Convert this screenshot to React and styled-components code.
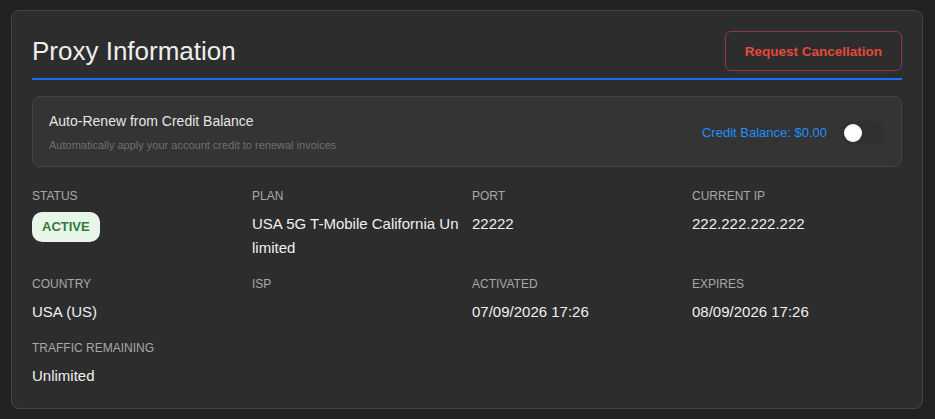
import React, { useState } from 'react';
import styled, { createGlobalStyle } from 'styled-components';

const Global = createGlobalStyle`
    body{
        margin:0;
        background:#222222;
        font-family:"Liberation Sans", Arial, sans-serif;
        color:#eeeeee;
    }
`

const fields = [
    { label: 'Status', badge: 'ACTIVE' },
    { label: 'Plan', value: 'USA 5G T-Mobile California Unlimited' },
    { label: 'Port', value: '22222' },
    { label: 'Current IP', value: '222.222.222.222' },
    { label: 'Country', value: 'USA (US)' },
    { label: 'ISP', value: '' },
    { label: 'Activated', value: '07/09/2026 17:26' },
    { label: 'Expires', value: '08/09/2026 17:26' },
    { label: 'Traffic Remaining', value: 'Unlimited' },
];

const App = () => {
    const [renew, setRenew] = useState(false);
    return (
        <Page>
            <Global />
            <Card>
                <Header>
                    <h2>Proxy Information</h2>
                    <CancelButton>Request Cancellation</CancelButton>
                </Header>
                <RenewBox>
                    <div className="text">
                        <div className="title">Auto-Renew from Credit Balance</div>
                        <div className="sub">Automatically apply your account credit to renewal invoices</div>
                    </div>
                    <div className="right">
                        <span className="balance">Credit Balance: $0.00</span>
                        <Toggle $on={renew} onClick={() => setRenew(!renew)} />
                    </div>
                </RenewBox>
                <Grid>
                    {fields.map(f => (
                        <Field key={f.label}>
                            <div className="label">{f.label}</div>
                            {f.badge
                                ? <Badge>{f.badge}</Badge>
                                : <div className="value">{f.value}</div>}
                        </Field>
                    ))}
                </Grid>
            </Card>
        </Page>
    );
};

export default App;

const Page = styled.div`
    padding:10px 12px 10px 11px;
`

const Card = styled.div`
    width:912px;
    box-sizing:border-box;
    background:#2d2d2d;
    border:1px solid #454545;
    border-radius:8px;
    padding:20px;
`

const Header = styled.div`
    display:flex;
    justify-content:space-between;
    align-items:center;
    padding-bottom:7px;
    border-bottom:2px solid #1a6ef5;
    h2{
        margin:0;
        font-size:26px;
        font-weight:400;
        color:#eeeeee;
    }
`

const CancelButton = styled.button`
    height:40px;
    padding:0 19px;
    background:transparent;
    border:1px solid #8e3a36;
    border-radius:6px;
    box-shadow:0 0 4px rgba(40,70,120,0.35);
    color:#e5483c;
    font-family:"Liberation Sans", Arial, sans-serif;
    font-size:13.5px;
    font-weight:700;
    cursor:pointer;
`

const RenewBox = styled.div`
    margin-top:16px;
    display:flex;
    justify-content:space-between;
    align-items:center;
    background:#343434;
    border:1px solid #444444;
    border-radius:8px;
    padding:16px 16px 14px 16px;
    .title{
        font-size:14px;
        line-height:16px;
        color:#e6e6e6;
    }
    .sub{
        margin-top:9px;
        font-size:11px;
        line-height:14px;
        color:#6f6f6f;
    }
    .right{
        display:flex;
        align-items:center;
        gap:14px;
    }
    .balance{
        font-size:13px;
        color:#1e90ff;
    }
`

const Toggle = styled.div`
    position:relative;
    width:44px;
    height:24px;
    border-radius:12px;
    background:${({$on})=>$on ? '#1a6ef5' : '#303030'};
    cursor:pointer;
    &:after{
        content:"";
        position:absolute;
        top:3px;
        left:${({$on})=>$on ? '23px' : '3px'};
        width:18px;
        height:18px;
        border-radius:50%;
        background:#ffffff;
    }
`

const Grid = styled.div`
    margin-top:22px;
    display:grid;
    grid-template-columns:repeat(4, 1fr);
    column-gap:10px;
    row-gap:17px;
`

const Field = styled.div`
    min-width:0;
    .label{
        font-size:12px;
        line-height:14px;
        color:#a8a8a8;
        text-transform:uppercase;
        margin-bottom:9px;
    }
    .value{
        padding-right:3px;
        font-size:15px;
        line-height:24px;
        color:#f0f0f0;
        word-break:break-all;
    }
`

const Badge = styled.span`
    display:inline-block;
    height:30px;
    line-height:30px;
    padding:0 10px;
    border-radius:10px;
    background:#e8f5e9;
    color:#2e7d32;
    font-size:13px;
    font-weight:700;
`
